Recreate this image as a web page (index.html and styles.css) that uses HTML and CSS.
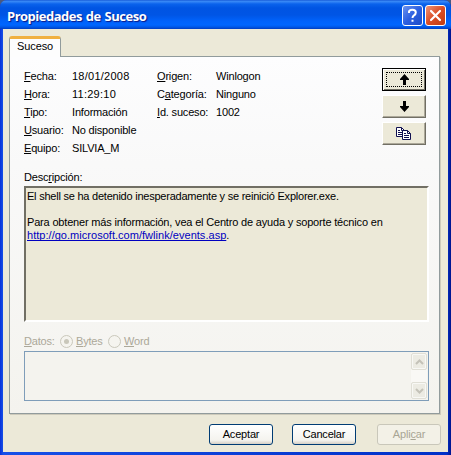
FILE: index.html
```html
<!DOCTYPE html>
<html lang="es">
<head>
<meta charset="utf-8">
<title>Propiedades de Suceso</title>
<link rel="stylesheet" href="styles.css">
</head>
<body>
<div class="window">
  <header class="titlebar">
    <h1>Propiedades de Suceso</h1>
    <button class="caption help"><svg width="19" height="19" viewBox="0 0 19 19"><path d="M6 7V5.8Q6.4 3.8 9.4 3.8Q12.8 3.8 12.8 6.5Q12.8 8.2 11 9.3Q9.5 10.2 9.5 12M9.5 13.7V15.7" fill="none" stroke="#fff" stroke-width="2"/></svg></button>
    <button class="caption close"><svg width="19" height="19" viewBox="0 0 19 19"><path d="M5 5L14 14M14 5L5 14" stroke="#fff" stroke-width="2.2" stroke-linecap="round"/></svg></button>
  </header>
  <main class="client">
    <div class="tab">Suceso</div>
    <section class="panel">
      <div class="summary">
        <dl class="facts">
          <dt><u>F</u>echa:</dt><dd class="digits">18/01/2008</dd><dt><u>O</u>rigen:</dt><dd>Winlogon</dd>
          <dt><u>H</u>ora:</dt><dd class="digits">11:29:10</dd><dt>C<u>a</u>tegoría:</dt><dd>Ninguno</dd>
          <dt><u>T</u>ipo:</dt><dd>Información</dd><dt><u>I</u>d. suceso:</dt><dd>1002</dd>
          <dt><u>U</u>suario:</dt><dd>No disponible</dd><dt></dt><dd></dd>
          <dt><u>E</u>quipo:</dt><dd>SILVIA_M</dd><dt></dt><dd></dd>
        </dl>
        <div class="nav">
          <button class="tool focused"><svg width="11" height="11" viewBox="0 0 11 11"><path d="M5.5 0L10 5V6H7V11H4V6H1V5Z"/></svg></button>
          <button class="tool"><svg width="11" height="11" viewBox="0 0 11 11"><path d="M5.5 11L10 6V5H7V0H4V5H1V6Z"/></svg></button>
          <button class="tool"><svg width="16" height="14" viewBox="0 0 16 14"><g fill="#fff" stroke="#101050"><path d="M.5 .5H5.5L8.5 3.5V9.5H.5Z"/><path d="M5.5 .5V3.5H8.5M2 3.5H4M2 5.5H6M2 7.5H6" fill="none"/><path d="M6.5 3.5H11.5L14.5 6.5V12.5H6.5Z"/><path d="M11.5 3.5V6.5H14.5M8 6.5H10M8 8.5H13M8 10.5H13" fill="none"/></g></svg></button>
        </div>
      </div>
      <div class="desc-label">Desc<u>r</u>ipción:</div>
      <div class="description">
        <p class="message">El shell se ha detenido inesperadamente y se reinició Explorer.exe.</p>
        <p class="gap">Para obtener más información, vea el Centro de ayuda y soporte técnico en</p>
        <p class="url"><a>http://go.microsoft.com/fwlink/events.asp</a>.</p>
      </div>
      <div class="data-row">
        <span class="data-label"><u>D</u>atos:</span>
        <i class="radio on"></i><span class="bytes"><u>B</u>ytes</span>
        <i class="radio"></i><span><u>W</u>ord</span>
      </div>
      <div class="data-box">
        <div class="scrollbar">
          <span class="arrow"><svg width="9" height="6" viewBox="0 0 9 6"><path d="M1 5L4.5 1.5L8 5" fill="none" stroke="#c4c2b8" stroke-width="2"/></svg></span>
          <span class="arrow"><svg width="9" height="6" viewBox="0 0 9 6"><path d="M1 1L4.5 4.5L8 1" fill="none" stroke="#c4c2b8" stroke-width="2"/></svg></span>
        </div>
      </div>
    </section>
    <footer class="actions">
      <button class="btn">Aceptar</button>
      <button class="btn second">Cancelar</button>
      <button class="btn disabled">Apli<u>c</u>ar</button>
    </footer>
  </main>
</div>
</body>
</html>
```
FILE: styles.css
```css
* { box-sizing: border-box; }
html, body { margin: 0; height: 100%; overflow: hidden; background: #4a5a80; }
body { font: 11px/13px "Liberation Sans", Arial, sans-serif; letter-spacing: -0.18px; color: #000; }
button { font: inherit; letter-spacing: inherit; padding: 0; margin: 0; color: inherit; }
svg { display: block; }
p, dl, dd, dt, h1 { margin: 0; }
u { text-decoration: underline; text-underline-offset: 1px; text-decoration-thickness: 1px; text-decoration-skip-ink: none; }
.window { width: 451px; height: 455px; border-radius: 7px 7px 0 0; display: flex; flex-direction: column; overflow: hidden;
  background: linear-gradient(90deg, #0831d9, #1650e8 3px, #0030c8 447px, #00138c); }
.titlebar { height: 29px; display: flex; align-items: center; padding: 2px 5px 0 7px; gap: 2px;
  background: linear-gradient(#0a4ad0 0, #3c8cf5 1px, #2f80f5 2px, #0a62ec 4px, #0054e3 8px, #0055e5 15px, #0062fb 21px, #0066ff 25px, #0058e8 27px, #003dc0 29px); }
.titlebar h1 { flex: 1; font: bold 13px/18px "Open Sans", sans-serif; letter-spacing: -0.5px; word-spacing: 1px; color: #fff; text-shadow: 1px 1px 1px #0a1883; white-space: nowrap; }
.caption { width: 21px; height: 21px; border: 1px solid #fff; border-radius: 3px; }
.help { background: linear-gradient(135deg, #6c94f0, #2c5fe0 50%, #1c4cc8); }
.close { background: linear-gradient(135deg, #ee9478, #da4d25 50%, #c03c12); }
.client { margin: 0 3px 3px; height: 423px; background: #ece9d8; padding: 7px 8px 0 6px; }
.tab { position: relative; z-index: 1; width: 52px; height: 21px; margin-bottom: -1px; border: 1px solid #919b9c; border-top: 3px solid #f0b040; border-bottom: 0; border-radius: 3px 3px 0 0; background: #fdfdfd; padding: 1px 0 0 7px; letter-spacing: -0.1px; }
.panel { width: 431px; height: 358px; border: 1px solid #919b9c; box-shadow: 1px 1px 0 #cdcabb; background: linear-gradient(#fdfdfe, #f9f9f9 30%, #f4f3ee); padding: 11px 10px 0 14px; }
.summary { display: flex; justify-content: space-between; height: 102px; }
.facts { display: grid; grid-template-columns: 48px 85px 59px 70px; grid-template-rows: repeat(5, 18px); padding-top: 2px; white-space: nowrap; }
.digits { letter-spacing: 0.25px; }
.nav { display: flex; flex-direction: column; gap: 4px; margin-right: 3px; }
.tool { width: 44px; height: 23px; display: flex; align-items: center; justify-content: center; background: #ece9d8; border: 1px solid; border-color: #fff #716f64 #716f64 #fff; box-shadow: inset -1px -1px #aca899; }
.focused { position: relative; border-color: #000; box-shadow: inset 1px 1px #fff, inset -1px -1px #716f64; }
.focused::after { content: ""; position: absolute; inset: 3px; border: 1px dotted #000; }
.desc-label { height: 16px; padding-top: 1px; }
.description { width: 405px; height: 136px; background: #ece9d8; border: 2px solid; border-color: #716f64 #fff #fff #716f64; padding: 2px 1px; white-space: nowrap; }
.message { letter-spacing: -0.23px; }
.gap { margin-top: 13px; }
.url { letter-spacing: 0.03px; }
a { color: #0000c0; text-decoration: underline; text-decoration-skip-ink: none; }
.data-row { display: flex; align-items: center; height: 28px; margin-top: 1px; padding-top: 9px; color: #aca899; }
.data-label { width: 36px; }
.radio { width: 13px; height: 13px; border: 1px solid #cac8bb; border-radius: 50%; background: #f5f4ef; margin-right: 3px; display: grid; place-items: center; }
.on::after { content: ""; width: 5px; height: 5px; border-radius: 50%; background: #c9c7ba; }
.bytes { width: 32px; }
.data-box { width: 405px; height: 50px; border: 1px solid #7f9db9; display: flex; justify-content: flex-end; padding: 1px; background: #f4f3ee; }
.scrollbar { width: 16px; height: 46px; display: flex; flex-direction: column; justify-content: space-between; background: #f9f8f5; }
.arrow { height: 17px; display: grid; place-items: center; background: #ecebe3; border: 1px solid #e0dfd6; border-radius: 2px; box-shadow: inset 0 0 0 1px #f8f8f5; }
.actions { display: flex; justify-content: flex-end; padding-top: 10px; margin-right: -1px; }
.btn { width: 64px; height: 21px; border: 1px solid #003c74; border-radius: 3px; background: linear-gradient(#fff, #f4f3ee 80%, #d6d0c5); }
.second { margin: 0 21px 0 19px; }
.disabled { background: #f3f1e7; border-color: #c9c7ba; color: #a8a594; }
```
